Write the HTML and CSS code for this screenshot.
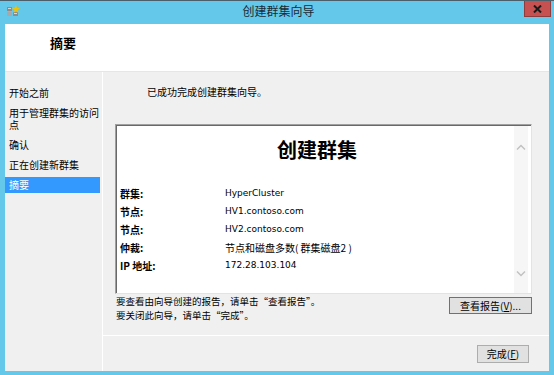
FILE: index.html
```html
<!DOCTYPE html>
<html lang="zh-CN">
<head>
    <meta charset="UTF-8">
    <title>创建群集向导</title>
    <link rel="stylesheet" href="styles.css">
</head>
<body>
    <div class="window">
        <div class="titlebar">
            <div class="tb-left">
                <svg class="app-icon" width="14" height="14" viewBox="0 0 14 14">
                    <rect x="1" y="3" width="5" height="4" fill="#8c8c8c"/>
                    <rect x="1" y="8" width="5" height="4" fill="#a8a8a8"/>
                    <rect x="7" y="8" width="5" height="4" fill="#8c8c8c"/>
                    <rect x="2" y="4" width="3" height="1" fill="#d8d8d8"/>
                    <rect x="8" y="9" width="3" height="1" fill="#d8d8d8"/>
                    <path d="M10 1 L11 4 L14 4 L11.5 6 L12.5 9 L10 7 L7.5 9 L8.5 6 L6 4 L9 4 Z" fill="#f2c200"/>
                </svg>
            </div>
            <div class="tb-title">创建群集向导</div>
            <div class="tb-right">
                <button class="close-btn">
                    <svg width="9" height="8" viewBox="0 0 9 8">
                        <path d="M1 0.5 L8 7.5 M8 0.5 L1 7.5" stroke="#1a1a1a" stroke-width="2"/>
                    </svg>
                </button>
            </div>
        </div>

        <div class="frame">
            <div class="header">
                <h1>摘要</h1>
            </div>

            <div class="main">
                <ul class="nav">
                    <li>开始之前</li>
                    <li>用于管理群集的访问点</li>
                    <li>确认</li>
                    <li>正在创建新群集</li>
                    <li class="active">摘要</li>
                </ul>

                <div class="content">
                    <div class="content-body">
                        <p class="intro">已成功完成创建群集向导。</p>

                        <div class="report">
                            <div class="report-inner">
                                <h2>创建群集</h2>
                                <table class="summary">
                                    <tr><th>群集:</th><td class="latin">HyperCluster</td></tr>
                                    <tr><th>节点:</th><td class="latin">HV1.contoso.com</td></tr>
                                    <tr><th>节点:</th><td class="latin">HV2.contoso.com</td></tr>
                                    <tr><th>仲裁:</th><td>节点和磁盘多数( 群集磁盘2 )</td></tr>
                                    <tr><th>IP 地址:</th><td class="latin">172.28.103.104</td></tr>
                                </table>
                            </div>
                            <div class="scrollbar">
                                <svg width="10" height="6" viewBox="0 0 10 6">
                                    <path d="M1 5.5 L5 1.5 L9 5.5" fill="none" stroke="#c2c2c2" stroke-width="1.5"/>
                                </svg>
                                <svg width="10" height="6" viewBox="0 0 10 6">
                                    <path d="M1 0.5 L5 4.5 L9 0.5" fill="none" stroke="#c2c2c2" stroke-width="1.5"/>
                                </svg>
                            </div>
                        </div>

                        <div class="report-row">
                            <p class="hint">要查看由向导创建的报告，请单击“查看报告”。<br>要关闭此向导，请单击“完成”。</p>
                            <button class="btn btn-default">查看报告(<u>V</u>)...</button>
                        </div>
                    </div>

                    <div class="footer">
                        <button class="btn btn-finish">完成(<u>F</u>)</button>
                    </div>
                </div>
            </div>
        </div>
    </div>
</body>
</html>
```

FILE: styles.css
```css
* {
    box-sizing: border-box;
}

body {
    margin: 0;
    font-family: "Noto Sans CJK SC", "Liberation Sans", sans-serif;
    font-size: 10px;
    color: #000;
}

.window {
    width: 554px;
    height: 375px;
    background: #64c8ea;
    display: flex;
    flex-direction: column;
}

/* title bar */
.titlebar {
    height: 24px;
    border-top: 1px solid #4a5f6a;
    display: grid;
    grid-template-columns: 1fr auto 1fr;
    align-items: start;
    padding: 0 3px 0 6px;
}

.app-icon {
    display: block;
    margin-top: 3px;
}

.tb-title {
    font-size: 12px;
    line-height: 20px;
    color: #1b2b36;
}

.tb-right {
    display: flex;
    justify-content: flex-end;
}

.close-btn {
    width: 27px;
    height: 16px;
    background: #c75050;
    border: 1px solid #8d3d3d;
    border-top: none;
    padding: 0;
    display: flex;
    align-items: center;
    justify-content: center;
}

/* window body */
.frame {
    flex: 1;
    display: flex;
    flex-direction: column;
    margin: 0 5px 4px 5px;
    background: #f0f0f0;
}

.header {
    height: 48px;
    background: #fff;
    border-bottom: 1px solid #e6e6e6;
}

.header h1 {
    margin: 0;
    padding: 11px 0 0 45px;
    font-size: 13px;
    line-height: 16px;
    font-weight: bold;
}

.main {
    flex: 1;
    display: flex;
}

.nav {
    width: 98px;
    margin: 0;
    padding: 13px 0 0 0;
    list-style: none;
    border-right: 1px solid #fff;
}

.nav li {
    margin: 0 2px 4px 0;
    padding: 2px 0 2px 4px;
    line-height: 12px;
}

.nav li.active {
    background: #3399ff;
    color: #fff;
}

.content {
    flex: 1;
    display: flex;
    flex-direction: column;
}

.content-body {
    flex: 1;
    padding: 13px 17px 0 12px;
}

.intro {
    margin: 0 0 0 32px;
    line-height: 14px;
}

/* report box */
.report {
    margin-top: 25px;
    height: 170px;
    background: #fff;
    border: 1px solid;
    border-color: #a0a0a0 #e3e3e3 #e3e3e3 #a0a0a0;
    box-shadow: inset 1px 1px 0 #696969;
    display: flex;
}

.report-inner {
    flex: 1;
    padding: 13px 0 0 4px;
}

.report-inner h2 {
    margin: 0 0 22px 0;
    text-align: center;
    font-size: 20px;
    line-height: 24px;
    font-weight: bold;
}

.summary {
    border-collapse: collapse;
}

.summary th {
    width: 105px;
    padding: 0;
    height: 18px;
    text-align: left;
    font-weight: bold;
    vertical-align: middle;
}

.summary td {
    padding: 0;
    vertical-align: middle;
}

.summary .latin {
    font-family: "DejaVu Sans", sans-serif;
    font-size: 9px;
}

.scrollbar {
    width: 14px;
    margin: 1px 3px 0 0;
    background: #f6f6f6;
    display: flex;
    flex-direction: column;
    justify-content: space-between;
    align-items: center;
    padding: 18px 0 16px 0;
}

.scrollbar svg {
    display: block;
}

.report-row {
    margin-top: 0;
    display: flex;
    justify-content: space-between;
    align-items: flex-start;
}

.hint {
    margin: 0 0 0 1px;
    font-size: 9.5px;
    line-height: 14px;
}

/* buttons */
.btn {
    font-family: "Noto Sans CJK SC", sans-serif;
    font-size: 10px;
    line-height: 14px;
    color: #000;
    background: #e1e1e1;
    border: 1px solid #adadad;
    padding: 0;
}

.btn-default {
    width: 83px;
    height: 17px;
    border-color: #3c7fb1;
    margin-top: 3px;
}

.footer {
    height: 36px;
    border-top: 1px solid #fff;
    display: flex;
    justify-content: flex-end;
    padding: 9px 20px 0 0;
}

.btn-finish {
    width: 52px;
    height: 18px;
}
```
